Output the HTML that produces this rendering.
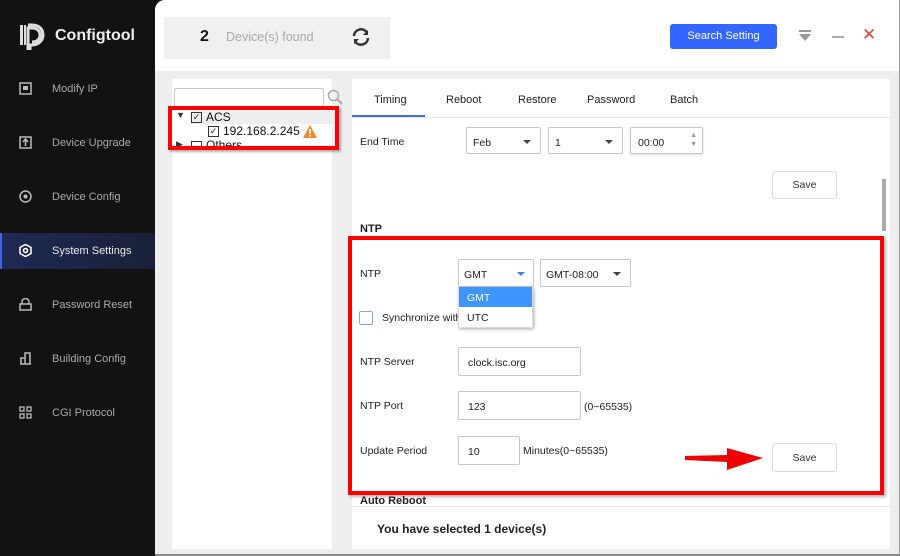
<!DOCTYPE html>
<html><head><meta charset="utf-8"><style>
*{margin:0;padding:0;box-sizing:border-box}
body{width:900px;height:556px;overflow:hidden;background:#121212;font-family:"Liberation Sans",Arial,sans-serif;font-size:11px;color:#222;position:relative}
.a{position:absolute}
.side{left:0;top:0;width:155px;height:556px;background:#121212}
.nav{left:0;width:155px;height:36px;color:#aaa;font-size:11px;line-height:36px}
.nav span{position:absolute;left:52px}
.nav svg{position:absolute;left:19px;top:11px}
.main{left:155px;top:0;width:745px;height:556px;background:#eeeeee;border-top-left-radius:10px;overflow:hidden;border-right:1px solid #999;border-bottom:2px solid #888}
.box{border:1px solid #c8c8c8;background:#fff;border-radius:2px}
.sel::after{content:"";position:absolute;right:9px;top:12px;border:4px solid transparent;border-top:4px solid #444}
.lbl{font-size:10.5px;color:#222}
.btn{border:1px solid #ddd;background:#fff;border-radius:3px;text-align:center;font-size:10.5px;color:#333}
</style></head><body>
<div class="a side">
 <div class="a" style="left:18px;top:22px;width:28px;height:28px">
  <svg width="28" height="28" viewBox="0 0 28 28"><path d="M2 3h3v20H2zM6 3h2v20H6z" fill="#ddd"/><path d="M10 3h4c8 0 11 5 11 10s-4 10-11 10h-2v4h-2V6h4c5 0 8 3 8 7s-3 7-8 7" fill="none" stroke="#ddd" stroke-width="3"/></svg>
 </div>
 <div class="a" style="left:55px;top:27px;color:#eee;font-size:16px;font-weight:bold">Configtool</div>
 <div class="a nav" style="top:71px"><svg width="13" height="13"><rect x="1" y="1" width="11" height="11" fill="none" stroke="#bbb" stroke-width="1.5"/><rect x="4" y="4" width="5" height="4" fill="#bbb"/></svg><span>Modify IP</span></div>
 <div class="a nav" style="top:125px"><svg width="13" height="13"><rect x="1" y="1" width="11" height="11" fill="none" stroke="#bbb" stroke-width="1.5"/><path d="M6.5 3v7M4 6l2.5-3 2.5 3" stroke="#bbb" fill="none" stroke-width="1.5"/></svg><span>Device Upgrade</span></div>
 <div class="a nav" style="top:179px"><svg width="13" height="13"><circle cx="6.5" cy="6.5" r="5.5" fill="none" stroke="#bbb" stroke-width="1.5"/><circle cx="6.5" cy="6.5" r="2" fill="#bbb"/></svg><span>Device Config</span></div>
 <div class="a nav" style="top:233px;background:linear-gradient(90deg,#1d2a52,#1a2038);border-left:2px solid #3d63e0;color:#e8e8e8"><svg width="13" height="13" style="left:17px"><path d="M6.5 .5l5.5 3v6l-5.5 3-5.5-3v-6z" fill="none" stroke="#fff" stroke-width="1.5"/><circle cx="6.5" cy="6.5" r="2" fill="none" stroke="#fff" stroke-width="1.5"/></svg><span style="left:50px">System Settings</span></div>
 <div class="a nav" style="top:287px"><svg width="13" height="13"><rect x="1" y="6" width="11" height="6" fill="none" stroke="#bbb" stroke-width="1.5"/><path d="M3 6V4a3.5 3.5 0 0 1 7 0v2" fill="none" stroke="#bbb" stroke-width="1.5"/></svg><span>Password Reset</span></div>
 <div class="a nav" style="top:341px"><svg width="13" height="13"><path d="M1 12h11M2 12V6h4v6M6 12V1h5v11" fill="none" stroke="#bbb" stroke-width="1.5"/></svg><span>Building Config</span></div>
 <div class="a nav" style="top:395px"><svg width="13" height="13"><rect x="1" y="1" width="4" height="4" fill="none" stroke="#bbb" stroke-width="1.3"/><rect x="8" y="1" width="4" height="4" fill="none" stroke="#bbb" stroke-width="1.3"/><rect x="1" y="8" width="4" height="4" fill="none" stroke="#bbb" stroke-width="1.3"/><rect x="8" y="8" width="4" height="4" fill="none" stroke="#bbb" stroke-width="1.3"/></svg><span>CGI Protocol</span></div>
</div>

<div class="a main">
 <div class="a" style="left:0;top:0;width:745px;height:71px;background:#fff"></div>
 <div class="a" style="left:9px;top:17px;width:226px;height:42px;background:#f0f0f0"></div>
 <div class="a" style="left:45px;top:28px;font-size:16px;font-weight:bold;color:#111">2</div>
 <div class="a" style="left:71px;top:30px;font-size:12.5px;color:#aaa">Device(s) found</div>
 <svg class="a" style="left:196px;top:27px" width="20" height="20" viewBox="0 0 20 20"><path d="M3 9a7 7 0 0 1 12.5-4" fill="none" stroke="#333" stroke-width="2.5"/><path d="M17 3v5h-5z" fill="#333"/><path d="M17 11a7 7 0 0 1-12.5 4" fill="none" stroke="#333" stroke-width="2.5"/><path d="M3 17v-5h5z" fill="#333"/></svg>
 <div class="a" style="left:515px;top:24px;width:107px;height:25px;background:#3366ff;border-radius:3px;color:#fff;font-size:11px;text-align:center;line-height:25px">Search Setting</div>
 <svg class="a" style="left:643px;top:30px" width="14" height="12"><rect x="1" y="0" width="12" height="2" fill="#999"/><path d="M1 4h12l-6 7z" fill="#999"/></svg>
 <div class="a" style="left:677px;top:36px;width:12px;height:2px;background:#aaa"></div>
 <div class="a" style="left:707px;top:25px;color:#e04040;font-size:17px">✕</div>

 <div class="a" style="left:17px;top:79px;width:160px;height:470px;background:#fff"></div>
 <div class="a box" style="left:19px;top:88px;width:150px;height:22px"></div>
 <svg class="a" style="left:172px;top:89px" width="16" height="16"><circle cx="6.5" cy="6.5" r="5" fill="none" stroke="#aaa" stroke-width="1.5"/><path d="M10 10l5 5" stroke="#aaa" stroke-width="2"/></svg>
 <div class="a" style="left:35px;top:111px;width:143px;height:13px;background:#eee"></div>
 <div class="a" style="left:21px;top:110px;font-size:9px;color:#333">▼</div>
 <div class="a" style="left:36px;top:112px;width:11px;height:11px;border:1px solid #333;font-size:9px;line-height:9px;text-align:center">✓</div>
 <div class="a" style="left:51px;top:110px;font-size:12px;color:#111">ACS</div>
 <div class="a" style="left:53px;top:126px;width:11px;height:11px;border:1px solid #333;font-size:9px;line-height:9px;text-align:center">✓</div>
 <div class="a" style="left:68px;top:124px;font-size:12px;color:#111">192.168.2.245</div>
 <svg class="a" style="left:148px;top:125px" width="14" height="13"><path d="M7 0l7 13H0z" fill="#f08a30"/><rect x="6.2" y="4" width="1.6" height="5" fill="#fff"/><rect x="6.2" y="10" width="1.6" height="1.6" fill="#fff"/></svg>
 <div class="a" style="left:21px;top:139px;font-size:9px;color:#333">▶</div>
 <div class="a" style="left:36px;top:141px;width:11px;height:6px;border:1px solid #333;border-bottom:none"></div>
 <div class="a" style="left:51px;top:138px;font-size:12px;color:#111;height:9px;overflow:hidden">Others</div>
 <div class="a" style="left:13px;top:106px;width:171px;height:44px;border:4px solid #ff0000;box-shadow:2px 2px 2px rgba(0,0,0,.3)"></div>

 <div class="a" style="left:197px;top:79px;width:538px;height:470px;background:#fff"></div>
 <div class="a" style="left:197px;top:117px;width:538px;height:1px;background:#e3e6ee"></div>
 <div class="a" style="left:197px;top:115px;width:73px;height:2px;background:#3d6ff0"></div>
 <div class="a" style="left:219px;top:94px;font-size:11px">Timing</div>
 <div class="a" style="left:291px;top:94px;font-size:11px">Reboot</div>
 <div class="a" style="left:363px;top:94px;font-size:11px">Restore</div>
 <div class="a" style="left:432px;top:94px;font-size:11px">Password</div>
 <div class="a" style="left:515px;top:94px;font-size:11px">Batch</div>
 <div class="a" style="left:727px;top:179px;width:4px;height:52px;background:#aaa"></div>

 <div class="a lbl" style="left:205px;top:136px">End Time</div>
 <div class="a box sel" style="left:311px;top:127px;width:75px;height:27px;padding:9px 6px;font-size:10.5px">Feb</div>
 <div class="a box sel" style="left:393px;top:127px;width:75px;height:27px;padding:9px 6px;font-size:10.5px">1</div>
 <div class="a box" style="left:475px;top:127px;width:73px;height:27px;padding:9px 7px;font-size:10.5px;box-shadow:0 1px 2px rgba(0,0,0,.15)">00:00<span style="position:absolute;right:5px;top:3px;font-size:7px;color:#999;line-height:9px">▲<br>▼</span></div>
 <div class="a btn" style="left:617px;top:171px;width:65px;height:28px;line-height:27px">Save</div>

 <div class="a" style="left:205px;top:223px;font-size:11px;font-weight:bold">NTP</div>
 <div class="a lbl" style="left:205px;top:268px">NTP</div>
 <div class="a box" style="left:303px;top:259px;width:76px;height:28px;padding:9px 5px;font-size:10.5px">GMT<span style="position:absolute;right:8px;top:12px;border:4px solid transparent;border-top-color:#3d7ff0"></span></div>
 <div class="a box sel" style="left:385px;top:259px;width:91px;height:28px;padding:9px 5px;font-size:10.5px">GMT-08:00</div>
 <div class="a" style="left:204px;top:311px;width:14px;height:14px;border:1px solid #8da3e0;border-radius:2px"></div>
 <div class="a lbl" style="left:227px;top:312px">Synchronize with</div>
 <div class="a" style="left:303px;top:287px;width:75px;height:41px;background:#fff;box-shadow:1px 1px 3px rgba(0,0,0,.35);border:1px solid #ddd"></div>
 <div class="a" style="left:304px;top:287px;width:73px;height:20px;background:#3d95ff;color:#fff;font-size:10.5px;padding:5px 8px">GMT</div>
 <div class="a lbl" style="left:312px;top:312px">UTC</div>

 <div class="a lbl" style="left:205px;top:356px">NTP Server</div>
 <div class="a box" style="left:303px;top:347px;width:123px;height:29px;padding:9px 9px;font-size:10.5px">clock.isc.org</div>
 <div class="a lbl" style="left:205px;top:400px">NTP Port</div>
 <div class="a box" style="left:303px;top:391px;width:123px;height:29px;padding:9px 9px;font-size:10.5px">123</div>
 <div class="a lbl" style="left:429px;top:401px">(0~65535)</div>
 <div class="a lbl" style="left:205px;top:445px">Update Period</div>
 <div class="a box" style="left:303px;top:436px;width:62px;height:29px;padding:9px 9px;font-size:10.5px">10</div>
 <div class="a lbl" style="left:368px;top:445px">Minutes(0~65535)</div>
 <div class="a btn" style="left:617px;top:443px;width:65px;height:29px;line-height:28px">Save</div>
 <svg class="a" style="left:528px;top:444px" width="84" height="28"><path d="M2 12l42-1v-7l36 10-36 12v-8L2 16z" fill="#ee0000"/></svg>

 <div class="a" style="left:193px;top:236px;width:536px;height:259px;border:4px solid #ff0000;box-shadow:2px 2px 3px rgba(0,0,0,.3)"></div>
 <div class="a" style="left:205px;top:495px;font-size:11px;font-weight:bold">Auto Reboot</div>
 <div class="a" style="left:197px;top:506px;width:538px;height:1px;background:#e5e5e5"></div>
 <div class="a" style="left:222px;top:522px;font-size:12px;font-weight:bold;color:#222">You have selected 1 device(s)</div>
</div>
</body></html>
